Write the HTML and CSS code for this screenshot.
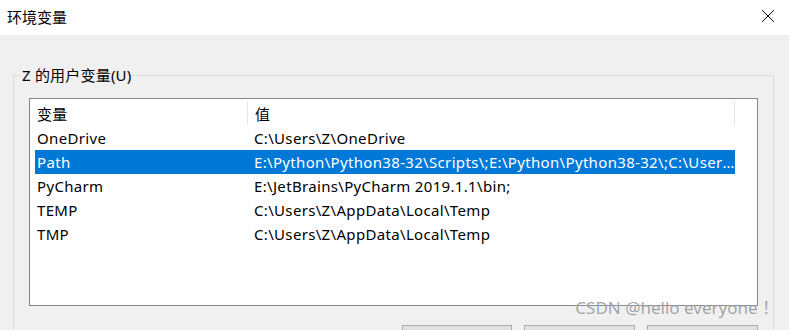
FILE: index.html
```html
<!DOCTYPE html>
<html lang="zh-CN">
<head>
  <meta charset="UTF-8">
  <title>环境变量</title>
  <link rel="stylesheet" href="styles.css">
</head>
<body>

<div class="titlebar">
  <span class="title">环境变量</span>
  <svg class="close" width="14" height="14" viewBox="0 0 14 14">
    <path d="M1 1 L13 13 M13 1 L1 13" stroke="#111" stroke-width="1" fill="none"/>
  </svg>
</div>

<div class="client">
  <fieldset class="group">
    <legend>Z 的用户变量(U)</legend>

    <div class="listbox">
      <div class="list-header">
        <div class="col-name">变量</div>
        <div class="col-value">值</div>
      </div>
      <div class="row">
        <div class="col-name">OneDrive</div>
        <div class="col-value">C:\Users\Z\OneDrive</div>
      </div>
      <div class="row selected">
        <div class="col-name">Path</div>
        <div class="col-value">E:\Python\Python38-32\Scripts\;E:\Python\Python38-32\;C:\Users\Z\AppData\Local\Microsoft\WindowsApps;</div>
      </div>
      <div class="row">
        <div class="col-name">PyCharm</div>
        <div class="col-value">E:\JetBrains\PyCharm 2019.1.1\bin;</div>
      </div>
      <div class="row">
        <div class="col-name">TEMP</div>
        <div class="col-value">C:\Users\Z\AppData\Local\Temp</div>
      </div>
      <div class="row">
        <div class="col-name">TMP</div>
        <div class="col-value">C:\Users\Z\AppData\Local\Temp</div>
      </div>
    </div>

    <div class="buttons">
      <button class="btn wide">新建(N)...</button>
      <button class="btn">编辑(E)...</button>
      <button class="btn">删除(D)</button>
    </div>
  </fieldset>

  <div class="watermark">CSDN @hello everyone ！</div>
</div>

</body>
</html>
```

FILE: styles.css
```css
html, body {
  margin: 0;
  height: 100%;
  overflow: hidden;
}
body {
  font-family: "Noto Sans", "Noto Sans CJK SC", sans-serif;
  font-size: 15px;
  color: #000;
  background: #f0f0f0;
}
.titlebar {
  height: 35px;
  background: #fff;
  display: flex;
  align-items: center;
  justify-content: space-between;
  padding: 0 14px 0 7px;
}
.title {
  line-height: 20px;
  margin-top: -2px;
}
.close {
  margin-top: -3px;
}
.client {
  position: relative;
  height: 295px;
  padding-top: 30px;
  box-sizing: border-box;
}
.group {
  margin: 0 15px 0 13px;
  padding: 0 7px;
  border: 1px solid #dcdcdc;
  height: 400px;
}
.group legend {
  padding: 0 1px;
  line-height: 20px;
  letter-spacing: 0.2px;
}
.listbox {
  margin: 13px 0 0 8px;
  width: 727px;
  height: 206px;
  background: #fff;
  border: 1px solid #828790;
  letter-spacing: 0.33px;
}
.list-header {
  display: flex;
  height: 27px;
}
.list-header .col-name,
.list-header .col-value {
  display: flex;
  align-items: center;
  padding-left: 7px;
  border-right: 1px solid #e5e5e5;
  margin: 2px 0 1px;
}
.list-header .col-name {
  width: 210px;
}
.list-header .col-value {
  width: 479px;
}
.row {
  display: flex;
  height: 24px;
  align-items: center;
  margin-left: 5px;
  width: 700px;
}
.row .col-name {
  width: 210px;
  padding-left: 2px;
}
.row .col-value {
  width: 481px;
  padding-left: 7px;
  white-space: nowrap;
  overflow: hidden;
  text-overflow: ellipsis;
}
.row.selected {
  background: #0078d7;
  color: #fff;
}
.buttons {
  display: flex;
  justify-content: flex-end;
  gap: 12px;
  margin-top: 19px;
  width: 737px;
}
.btn {
  width: 111px;
  height: 26px;
  background: #e1e1e1;
  border: 1px solid #adadad;
  font: inherit;
  padding-top: 14px;
}
.btn.wide {
  width: 110px;
}
.watermark {
  position: absolute;
  right: 10px;
  top: 259px;
  font-size: 17px;
  color: rgba(100, 100, 100, 0.6);
  text-shadow: 0 0 1px rgba(255, 255, 255, 0.9);
}
```
